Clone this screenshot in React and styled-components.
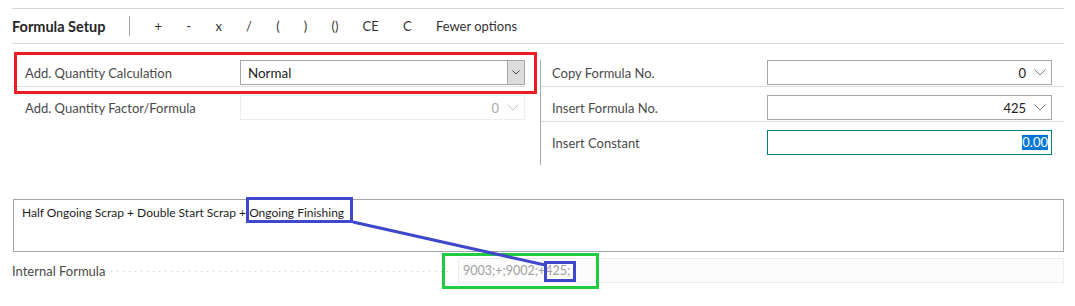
import styled, { createGlobalStyle } from "styled-components";

const GlobalStyle = createGlobalStyle`
  body {
    margin: 0;
    background: #fff;
    font-family: "Segoe UI", Lato, "Liberation Sans", sans-serif;
    color: #212121;
  }
`;

const Page = styled.div`
  position: relative;
  box-sizing: border-box;
  height: 306px;
  padding: 8px 11px 0 12px;
  font-size: 13px;
`;

const Toolbar = styled.div`
  display: flex;
  align-items: center;
  height: 34px;
  border-top: 1px solid #d6d6d6;
  border-bottom: 1px solid #d6d6d6;
`;

const Title = styled.div`
  font-size: 14.5px;
  font-weight: 700;
  color: #262626;
  padding-right: 23px;
`;

const Separator = styled.div`
  width: 1px;
  height: 20px;
  background: #a6a6a6;
  margin-right: 13px;
`;

const ToolButton = styled.button`
  border: none;
  background: none;
  font: inherit;
  color: #333;
  padding: 0 12.1px;
  cursor: pointer;
`;

const Fields = styled.div`
  display: flex;
  margin-top: 8px;
`;

const Column = styled.div`
  width: ${(p) => p.$width}px;
  flex-shrink: 0;
`;

const Divider = styled.div`
  align-self: flex-start;
  width: 1px;
  height: 105px;
  margin: 8px 0 0 14px;
  background: #a6a6a6;
`;

const Row = styled.div`
  display: flex;
  align-items: center;
  justify-content: space-between;
  box-sizing: border-box;
  height: 35px;
  padding: 8px ${(p) => (p.$right ? "12px" : "1px")} 1px
    ${(p) => (p.$right ? "11px" : "13px")};
  border-bottom: 1px solid ${(p) => (p.$last ? "transparent" : "#dcdcdc")};
`;

const Label = styled.span`
  color: #4a4a4a;
`;

const Box = styled.div`
  display: flex;
  align-items: center;
  box-sizing: border-box;
  width: 285px;
  height: 25px;
  border: 1px solid ${(p) => p.$border || "#a6a6a6"};
`;

const ComboValue = styled.span`
  flex: 1;
  padding-left: 7px;
  font-size: 13.4px;
`;

const ComboButton = styled.div`
  display: flex;
  align-items: center;
  justify-content: center;
  width: 16px;
  align-self: stretch;
  background: #dcdcdc;
  border-left: 1px solid #a6a6a6;
`;

const LookupBox = styled(Box)`
  justify-content: flex-end;
  gap: 8px;
  padding-right: 5px;
  color: ${(p) => (p.$disabled ? "#a8a8a8" : "#212121")};
`;

const ConstantBox = styled(Box)`
  justify-content: flex-end;
  padding-right: 3px;
`;

const Selected = styled.span`
  background: #0078d7;
  color: #fff;
  line-height: 15px;
`;

const Memo = styled.div`
  box-sizing: border-box;
  height: 53px;
  margin: 34px 0 0 1px;
  padding: 3px 8px;
  line-height: 19px;
  border: 1px solid #a6a6a6;
  font-size: 12px;
  color: #1e1e1e;
`;

const FormulaRow = styled.div`
  display: flex;
  align-items: center;
  height: 25px;
  margin-top: 6px;
`;

const Leader = styled.div`
  flex: 1;
  height: 1px;
  margin: 2px 8px 0 6px;
  background-image: linear-gradient(to right, #c8c8c8 1px, transparent 1px);
  background-size: 6px 1px;
  background-repeat: repeat-x;
`;

const FormulaField = styled.div`
  display: flex;
  align-items: center;
  box-sizing: border-box;
  width: 606px;
  height: 25px;
  padding-left: 4px;
  background: #fcfcfc;
  border: 1px solid #ececec;
  color: #a0a0a0;
  font-size: 12.5px;
`;

const Overlay = styled.svg`
  position: absolute;
  top: 0;
  left: 0;
  pointer-events: none;
`;

const Chevron = ({ color = "#7a7a7a", w = 12, h = 6 }) => (
  <svg width={w} height={h + 1} viewBox={`0 0 ${w} ${h + 1}`}>
    <polyline
      points={`0.5,0.5 ${w / 2},${h} ${w - 0.5},0.5`}
      fill="none"
      stroke={color}
      strokeWidth="1"
    />
  </svg>
);

const tools = ["+", "-", "x", "/", "(", ")", "()", "CE", "C", "Fewer options"];

export default function App() {
  return (
    <>
      <GlobalStyle />
      <Page>
        <Toolbar>
          <Title>Formula Setup</Title>
          <Separator />
          {tools.map((t) => (
            <ToolButton key={t}>{t}</ToolButton>
          ))}
        </Toolbar>

        <Fields>
          <Column $width={514}>
            <Row>
              <Label>Add. Quantity Calculation</Label>
              <Box>
                <ComboValue>Normal</ComboValue>
                <ComboButton>
                  <Chevron color="#444" w={8} h={4} />
                </ComboButton>
              </Box>
            </Row>
            <Row $last>
              <Label>Add. Quantity Factor/Formula</Label>
              <LookupBox $border="#ededed" $disabled>
                0
                <Chevron color="#c8c8c8" />
              </LookupBox>
            </Row>
          </Column>
          <Divider />
          <Column $width={523}>
            <Row $right>
              <Label>Copy Formula No.</Label>
              <LookupBox>
                0
                <Chevron />
              </LookupBox>
            </Row>
            <Row $right>
              <Label>Insert Formula No.</Label>
              <LookupBox>
                425
                <Chevron />
              </LookupBox>
            </Row>
            <Row $right $last>
              <Label>Insert Constant</Label>
              <ConstantBox $border="#008080">
                <Selected>0.00</Selected>
              </ConstantBox>
            </Row>
          </Column>
        </Fields>

        <Memo>Half Ongoing Scrap + Double Start Scrap + Ongoing Finishing</Memo>

        <FormulaRow>
          <Label>Internal Formula</Label>
          <Leader />
          <FormulaField>9003;+;9002;+425;</FormulaField>
        </FormulaRow>

        <Overlay width="1075" height="306" viewBox="0 0 1075 306">
          <rect x="15.5" y="53.5" width="520" height="39" fill="none" stroke="#ed1c24" strokeWidth="3" />
          <rect x="443.5" y="254.5" width="154" height="33" fill="none" stroke="#1fcb3f" strokeWidth="3" />
          <rect x="247.5" y="198.5" width="104" height="23" fill="none" stroke="#3f48cc" strokeWidth="3" />
          <line x1="353" y1="222" x2="545" y2="265" stroke="#3f48cc" strokeWidth="3" />
          <rect x="545.5" y="262.5" width="29" height="18" fill="none" stroke="#3f48cc" strokeWidth="3" />
        </Overlay>
      </Page>
    </>
  );
}
